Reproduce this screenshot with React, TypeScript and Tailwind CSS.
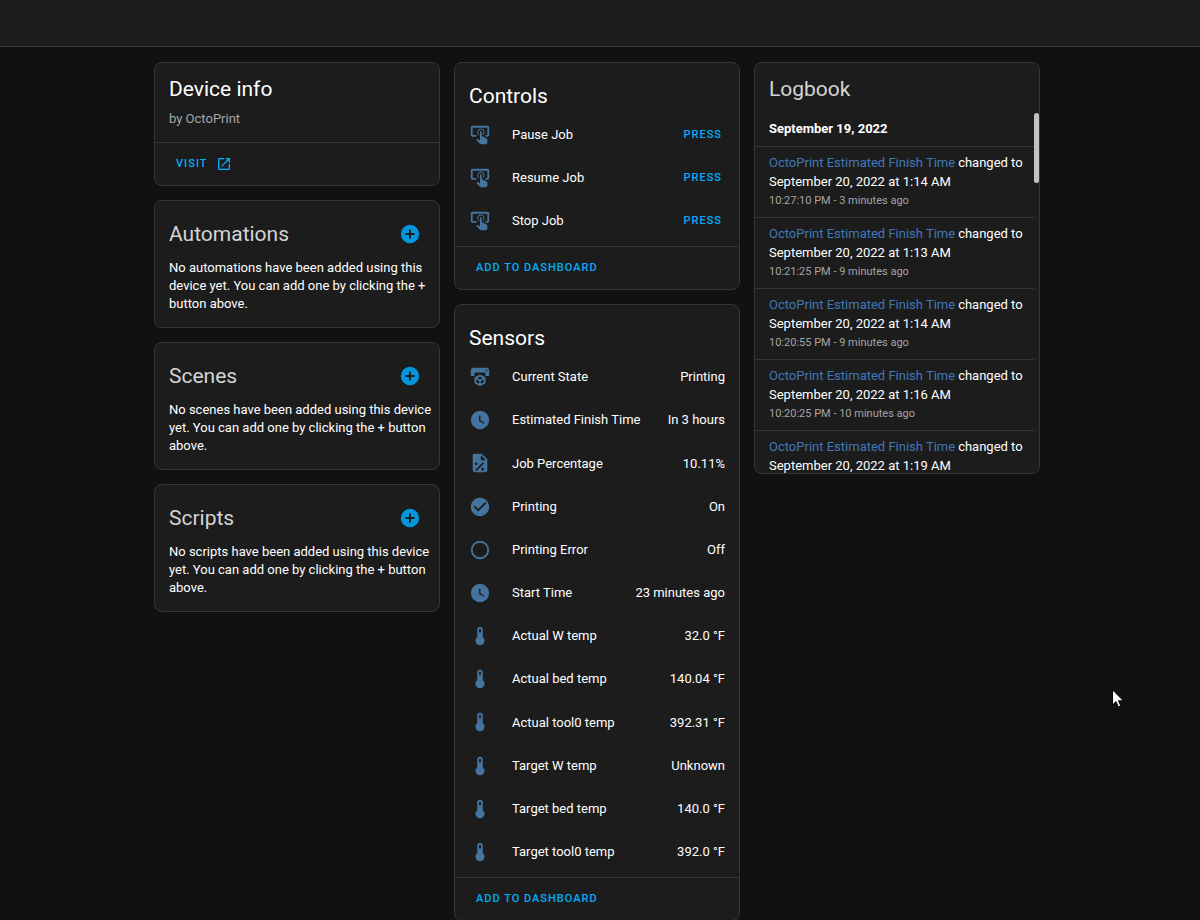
import type { ReactNode } from "react";

const icons = {
  tapButton:
    "M13 5C15.21 5 17 6.79 17 9C17 10.5 16.2 11.77 15 12.46V11.24C15.61 10.69 16 9.89 16 9C16 7.34 14.66 6 13 6S10 7.34 10 9C10 9.89 10.39 10.69 11 11.24V12.46C9.8 11.77 9 10.5 9 9C9 6.79 10.79 5 13 5M20 20.5C19.97 21.32 19.32 21.97 18.5 22H13C12.62 22 12.26 21.85 12 21.57L8 17.37L8.74 16.6C8.93 16.39 9.2 16.28 9.5 16.28H9.7L12 18V9C12 8.45 12.45 8 13 8S14 8.45 14 9V13.47L15.21 13.6L19.15 15.79C19.68 16.03 20 16.56 20 17.14V20.5M20 2H4C2.9 2 2 2.9 2 4V12C2 13.11 2.9 14 4 14H8V12L4 12L4 4H20L20 12H18V14H20V13.96L20.04 14C21.13 14 22 13.09 22 12V4C22 2.9 21.11 2 20 2Z",
  printer3d:
    "M19,6A1,1 0 0,0 20,5A1,1 0 0,0 19,4A1,1 0 0,0 18,5A1,1 0 0,0 19,6M19,2A3,3 0 0,1 22,5V11H18V7H6V11H2V5A3,3 0 0,1 5,2H19M18,18.25C18,18.63 17.79,18.96 17.47,19.13L12.57,21.82C12.4,21.94 12.21,22 12,22C11.79,22 11.59,21.94 11.43,21.82L6.53,19.13C6.21,18.96 6,18.63 6,18.25V13C6,12.62 6.21,12.29 6.53,12.12L11.43,9.68C11.59,9.56 11.79,9.5 12,9.5C12.21,9.5 12.4,9.56 12.57,9.68L17.47,12.12C17.79,12.29 18,12.62 18,13V18.25M12,11.65L9.04,13L12,14.6L14.96,13L12,11.65M8,17.66L11,19.29V16.33L8,14.71V17.66M16,17.66V14.71L13,16.33V19.29L16,17.66Z",
  clock:
    "M12,2A10,10 0 0,0 2,12A10,10 0 0,0 12,22A10,10 0 0,0 22,12A10,10 0 0,0 12,2M16.2,16.2L11,13V7H12.5V12.2L17,14.9L16.2,16.2Z",
  filePercent:
    "M14,2H6A2,2 0 0,0 4,4V20A2,2 0 0,0 6,22H18A2,2 0 0,0 20,20V8L14,2M13,9V3.5L18.5,9H13M7.9,11.4A1.5,1.5 0 0,1 9.4,12.9A1.5,1.5 0 0,1 7.9,14.4A1.5,1.5 0 0,1 6.4,12.9A1.5,1.5 0 0,1 7.9,11.4M15.2,11.2L16.5,12.5L8.1,20.6L6.8,19.3L15.2,11.2M14.9,17.2A1.5,1.5 0 0,1 16.4,18.7A1.5,1.5 0 0,1 14.9,20.2A1.5,1.5 0 0,1 13.4,18.7A1.5,1.5 0 0,1 14.9,17.2Z",
  checkCircle:
    "M12 2C6.5 2 2 6.5 2 12S6.5 22 12 22 22 17.5 22 12 17.5 2 12 2M10 17L5 12L6.41 10.59L10 14.17L17.59 6.58L19 8L10 17Z",
  circleOutline:
    "M12,20A8,8 0 0,1 4,12A8,8 0 0,1 12,4A8,8 0 0,1 20,12A8,8 0 0,1 12,20M12,2A10,10 0 0,0 2,12A10,10 0 0,0 12,22A10,10 0 0,0 22,12A10,10 0 0,0 12,2Z",
  thermometer:
    "M15 13V5A3 3 0 0 0 9 5V13A5 5 0 1 0 15 13M12 4A1 1 0 0 1 13 5V8H11V5A1 1 0 0 1 12 4Z",
  plusCircle:
    "M17,13H13V17H11V13H7V11H11V7H13V11H17M12,2A10,10 0 0,0 2,12A10,10 0 0,0 12,22A10,10 0 0,0 22,12A10,10 0 0,0 12,2Z",
  openInNew:
    "M14,3V5H17.59L7.76,14.83L9.17,16.24L19,6.41V10H21V3M19,19H5V5H12V3H5C3.89,3 3,3.9 3,5V19A2,2 0 0,0 5,21H19A2,2 0 0,0 21,19V12H19V19Z",
};

type IconName = keyof typeof icons;

const controls = ["Pause Job", "Resume Job", "Stop Job"];

const sensors: { icon: IconName; name: string; state: string }[] = [
  { icon: "printer3d", name: "Current State", state: "Printing" },
  { icon: "clock", name: "Estimated Finish Time", state: "In 3 hours" },
  { icon: "filePercent", name: "Job Percentage", state: "10.11%" },
  { icon: "checkCircle", name: "Printing", state: "On" },
  { icon: "circleOutline", name: "Printing Error", state: "Off" },
  { icon: "clock", name: "Start Time", state: "23 minutes ago" },
  { icon: "thermometer", name: "Actual W temp", state: "32.0 °F" },
  { icon: "thermometer", name: "Actual bed temp", state: "140.04 °F" },
  { icon: "thermometer", name: "Actual tool0 temp", state: "392.31 °F" },
  { icon: "thermometer", name: "Target W temp", state: "Unknown" },
  { icon: "thermometer", name: "Target bed temp", state: "140.0 °F" },
  { icon: "thermometer", name: "Target tool0 temp", state: "392.0 °F" },
];

const logbook: { value: string; time?: string }[] = [
  { value: "September 20, 2022 at 1:14 AM", time: "10:27:10 PM - 3 minutes ago" },
  { value: "September 20, 2022 at 1:13 AM", time: "10:21:25 PM - 9 minutes ago" },
  { value: "September 20, 2022 at 1:14 AM", time: "10:20:55 PM - 9 minutes ago" },
  { value: "September 20, 2022 at 1:16 AM", time: "10:20:25 PM - 10 minutes ago" },
  { value: "September 20, 2022 at 1:19 AM" },
];

function Icon({ name, className = "" }: { name: IconName; className?: string }) {
  return (
    <svg viewBox="0 0 24 24" fill="currentColor" aria-hidden="true" className={`shrink-0 ${className}`}>
      <path d={icons[name]} />
    </svg>
  );
}

function Card({ children, className = "" }: { children: ReactNode; className?: string }) {
  return (
    <section className={`flex flex-col overflow-hidden rounded-lg border border-[#363636] bg-[#1c1c1c] ${className}`}>
      {children}
    </section>
  );
}

function CardActions({ children }: { children: ReactNode }) {
  return (
    <div className="flex h-[43px] items-center border-t border-[#363636] px-[21px] text-[11px] font-medium tracking-[1px] text-[#00aefb]">
      {children}
    </div>
  );
}

/** Automations, scenes and scripts all show the same empty state with an add button. */
function RelatedCard({ title, text }: { title: string; text: string }) {
  return (
    <Card className="pt-[17px] pr-1 pb-[14px] pl-3.5">
      <div className="flex h-8 items-center justify-between pr-3.5">
        <h2 className="text-[21px] leading-8 text-[#d4d4d4]">{title}</h2>
        <button type="button" aria-label={`Add ${title.toLowerCase()}`} className="text-[#0396da]">
          <Icon name="plusCircle" className="size-[22px]" />
        </button>
      </div>
      <p className="pt-[9px] leading-[18px]">{text}</p>
    </Card>
  );
}

function EntityRow({ icon, name, children }: { icon: IconName; name: string; children: ReactNode }) {
  return (
    <li className="flex h-9 items-center">
      <Icon name={icon} className="size-[22px] text-[#44739e]" />
      <span className="flex-1 pl-[21px]">{name}</span>
      {children}
    </li>
  );
}

export default function App() {
  return (
    <div className="relative h-screen overflow-hidden bg-[#111111] font-[Roboto,sans-serif] text-[13px] text-white">
      <header className="h-[47px] border-b border-[#363636] bg-[#1c1c1c]" />

      <main className="pt-[15px] pr-1.5">
        <div className="mx-auto grid max-w-[886px] grid-cols-3 items-start gap-3.5">
          <div className="flex flex-col gap-3.5">
            <Card>
              <div className="px-3.5 pt-2.5 pb-[13px]">
                <h1 className="text-[21px] leading-8">Device info</h1>
                <p className="pt-1 leading-5 text-[#a5a5a5]">by OctoPrint</p>
              </div>
              <CardActions>
                <a href="#visit" className="flex items-center gap-2">
                  VISIT
                  <Icon name="openInNew" className="size-4" />
                </a>
              </CardActions>
            </Card>
            <RelatedCard
              title="Automations"
              text="No automations have been added using this device yet. You can add one by clicking the + button above."
            />
            <RelatedCard
              title="Scenes"
              text="No scenes have been added using this device yet. You can add one by clicking the + button above."
            />
            <RelatedCard
              title="Scripts"
              text="No scripts have been added using this device yet. You can add one by clicking the + button above."
            />
          </div>

          <div className="flex flex-col gap-3.5">
            <Card>
              <h2 className="px-3.5 pt-[17px] text-[21px] leading-8">Controls</h2>
              <ul className="flex flex-col gap-[7px] px-3.5 pt-[5px] pb-[7px]">
                {controls.map((name) => (
                  <EntityRow key={name} icon="tapButton" name={name}>
                    <button
                      type="button"
                      aria-label={`Press ${name}`}
                      className="pr-[3px] text-[11px] font-medium tracking-[1px] text-[#00aefb]"
                    >
                      PRESS
                    </button>
                  </EntityRow>
                ))}
              </ul>
              <CardActions>
                <button type="button">ADD TO DASHBOARD</button>
              </CardActions>
            </Card>

            <Card>
              <h2 className="px-3.5 pt-[17px] text-[21px] leading-8">Sensors</h2>
              <ul className="flex h-[523px] flex-col justify-between px-3.5 pt-[5px] pb-[7px]">
                {sensors.map((s) => (
                  <EntityRow key={s.name} icon={s.icon} name={s.name}>
                    <span>{s.state}</span>
                  </EntityRow>
                ))}
              </ul>
              <CardActions>
                <button type="button">ADD TO DASHBOARD</button>
              </CardActions>
            </Card>
          </div>

          <Card className="max-h-[412px]">
            <h2 className="px-3.5 pt-2.5 pb-2 text-[21px] leading-8 text-[#d4d4d4]">Logbook</h2>
            <div className="flex min-h-0 flex-1">
              <div className="min-w-0 flex-1 overflow-hidden">
                <h3 className="h-[33px] px-3.5 leading-8 font-bold">September 19, 2022</h3>
                {logbook.map((entry, i) => (
                  <div key={i} className="h-[71px] border-t border-[#363636] pt-1.5 pr-1 pl-3.5 leading-[19px]">
                    <p className="flex flex-wrap gap-x-[3px]">
                      <a href="#history" className="text-[#4078b8]">
                        OctoPrint Estimated Finish Time
                      </a>
                      <span>changed to</span>
                      <span>{entry.value}</span>
                    </p>
                    {entry.time && <p className="text-[11px] text-[#a5a5a5]">{entry.time}</p>}
                  </div>
                ))}
              </div>
              <div className="h-[70px] w-[5px] rounded-full bg-[#c1c1c1]" />
            </div>
          </Card>
        </div>
      </main>

      {/* mouse pointer */}
      <svg viewBox="0 0 12 19" className="absolute top-[689px] left-[1112px] h-[19px] w-3" aria-hidden="true">
        <path d="M.5 .8V16L4 12.6L6.4 18L8.8 17L6.5 11.8H11.4Z" fill="#fff" stroke="#000" />
      </svg>
    </div>
  );
}
